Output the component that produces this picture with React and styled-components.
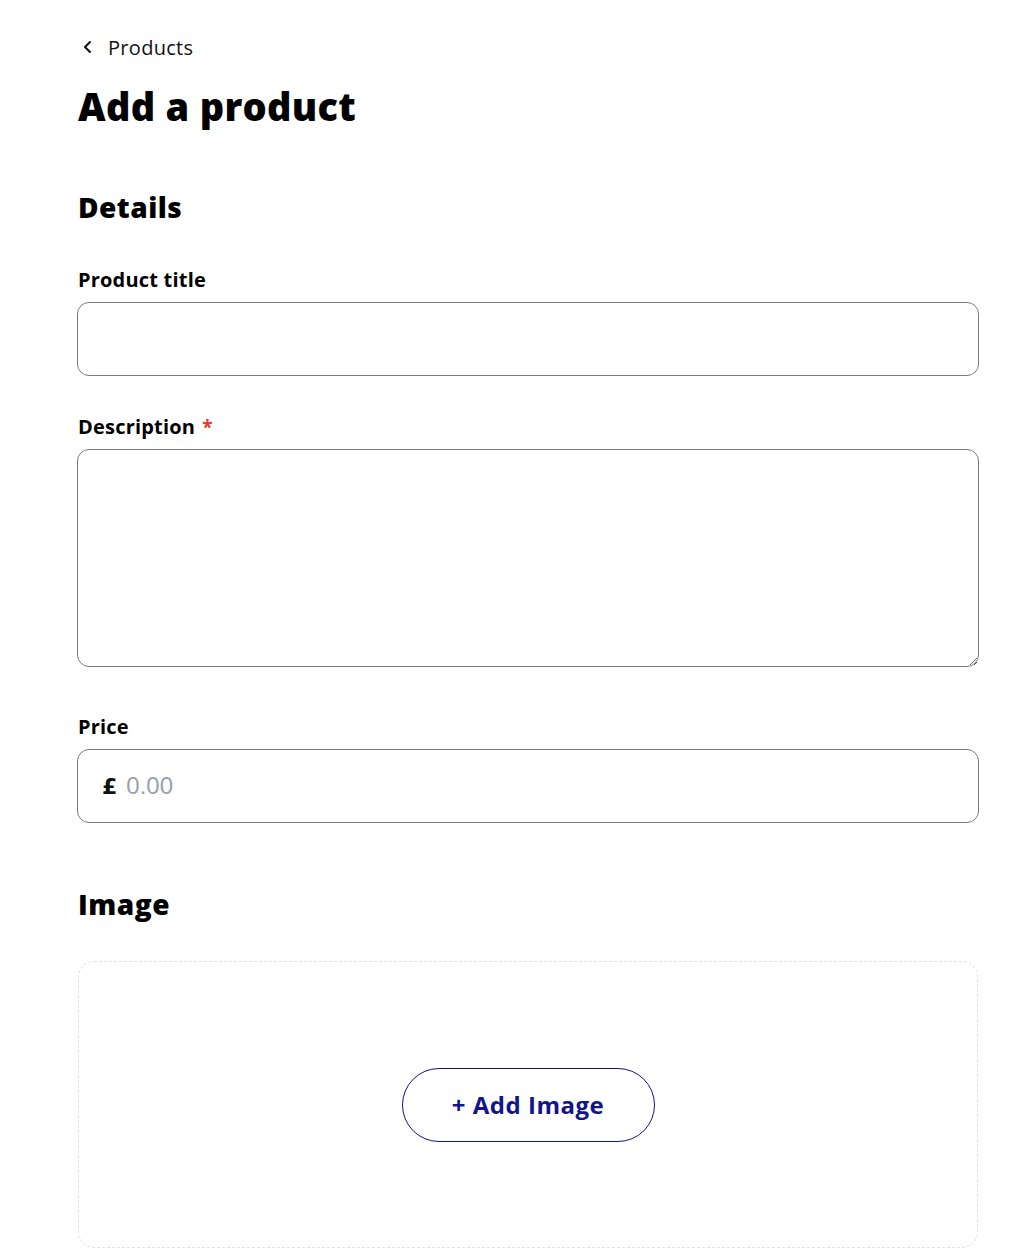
import styled, { createGlobalStyle } from "styled-components";

const GlobalStyle = createGlobalStyle`
  body {
    margin: 0;
    background: #ffffff;
    font-family: "Open Sans", "Noto Sans", sans-serif;
    color: #000000;
  }
`;

const Page = styled.main`
  width: 902px;
  padding: 35px 0 0 77px;
  box-sizing: content-box;
`;

const BackLink = styled.a`
  display: flex;
  align-items: center;
  gap: 14px;
  height: 24px;
  margin-left: 5px;
  font-size: 20px;
  letter-spacing: 0.3px;
  color: #111111;
  text-decoration: none;
  cursor: pointer;
`;

const Title = styled.h1`
  margin: 24px 0 0 1px;
  font-size: 38px;
  line-height: 46px;
  font-weight: 800;
  letter-spacing: 0.3px;
`;

const SectionTitle = styled.h2`
  margin: ${(p) => p.$top}px 0 0 1px;
  font-size: 28px;
  line-height: 34px;
  font-weight: 800;
  letter-spacing: 0.5px;
`;

const Label = styled.label`
  display: block;
  margin: ${(p) => p.$top}px 0 10px 1px;
  font-size: 20px;
  line-height: 24px;
  font-weight: 700;
  letter-spacing: 0.2px;
`;

const Required = styled.span`
  color: #e53935;
  margin-left: 7px;
  font-size: 19px;
  vertical-align: top;
`;

const TextInput = styled.input`
  display: block;
  width: 100%;
  height: 74px;
  box-sizing: border-box;
  border: 1.5px solid #7a7a7a;
  border-radius: 12px;
  padding: 0 22px;
  font-size: 22px;
  font-family: inherit;
  outline: none;
`;

const TextArea = styled.textarea`
  display: block;
  width: 100%;
  height: 218px;
  box-sizing: border-box;
  border: 1.5px solid #7a7a7a;
  border-radius: 12px;
  padding: 16px 22px;
  font-size: 20px;
  font-family: inherit;
  outline: none;
`;

const PriceBox = styled.div`
  display: flex;
  align-items: center;
  gap: 9px;
  height: 74px;
  box-sizing: border-box;
  border: 1.5px solid #7a7a7a;
  border-radius: 12px;
  padding: 0 24px;
`;

const Currency = styled.span`
  font-family: "DejaVu Sans", sans-serif;
  font-size: 22px;
  font-weight: 700;
  color: #111111;
`;

const PriceInput = styled.input`
  flex: 1;
  border: none;
  outline: none;
  padding: 0;
  font-family: "Liberation Sans", Arial, sans-serif;
  font-size: 24px;
  color: #111111;

  &::placeholder {
    color: #9aa1ad;
  }
`;

const DropZone = styled.div`
  display: flex;
  align-items: center;
  justify-content: center;
  width: 900px;
  height: 287px;
  margin: 40px 0 0 1px;
  box-sizing: border-box;
  border: 1px dashed #e2e2e2;
  border-radius: 16px;
`;

const AddButton = styled.button`
  width: 253px;
  height: 74px;
  border: 1.5px solid #14148a;
  border-radius: 37px;
  background: #ffffff;
  color: #14148a;
  font-family: "Open Sans", sans-serif;
  font-size: 24px;
  font-weight: 700;
  letter-spacing: 0.5px;
  cursor: pointer;
`;

const Chevron = () => (
  <svg width="12" height="14" viewBox="0 0 12 14" fill="none">
    <path d="M8 2 L3 7 L8 12" stroke="#111" strokeWidth="2" strokeLinecap="round" strokeLinejoin="round" />
  </svg>
);

export default function App() {
  return (
    <>
      <GlobalStyle />
      <Page>
        <BackLink>
          <Chevron />
          Products
        </BackLink>
        <Title>Add a product</Title>

        <SectionTitle $top={61}>Details</SectionTitle>

        <Label $top={44}>Product title</Label>
        <TextInput type="text" />

        <Label $top={39}>
          Description<Required>*</Required>
        </Label>
        <TextArea />

        <Label $top={48}>Price</Label>
        <PriceBox>
          <Currency>£</Currency>
          <PriceInput placeholder="0.00" />
        </PriceBox>

        <SectionTitle $top={64}>Image</SectionTitle>
        <DropZone>
          <AddButton>+ Add Image</AddButton>
        </DropZone>
      </Page>
    </>
  );
}
